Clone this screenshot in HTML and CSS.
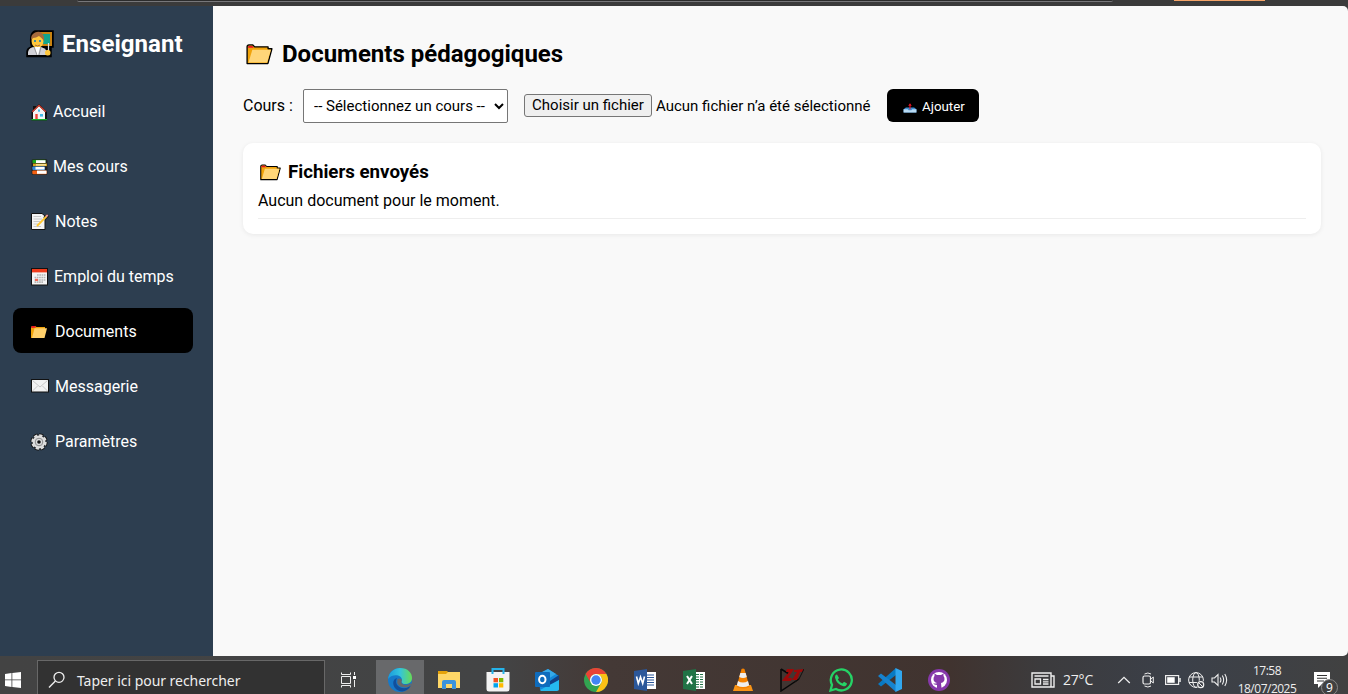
FILE: index.html
```html
<!DOCTYPE html>
<html lang="fr">
<head>
<meta charset="utf-8">
<title>Documents pédagogiques</title>
<link rel="stylesheet" href="styles.css">
</head>
<body>
<svg class="defs" aria-hidden="true">
  <symbol id="folder" viewBox="0 0 28 22">
    <path d="M1 20.5V3Q1 1 3 1H7L9 3H23V5H27L22.8 20.5Z" fill="#f0a30a" stroke="currentColor" stroke-width="1.4" stroke-linejoin="round"/>
    <path d="M6.5 6H26L22 19.5H2.5Z" fill="#ffd679"/>
    <path class="tab" d="M2 4V3Q2 2 3 2H6.5L8 4Z"/>
  </symbol>
  <symbol id="folder-flat" viewBox="0 0 16 12">
    <path d="M0 12V2Q0 0 1.5 0H4L5.5 1H14V3L11 12Z" fill="#f0a30a"/>
    <path d="M3.5 2.2H16L13.5 12H1Z" fill="#ffd06b"/>
    <path class="tab" d="M.3 2V1Q.5 0 1.5 0H4L5 1.5Z"/>
  </symbol>
</svg>
<div class="browser-bar"><div class="address"></div><div class="accent"></div></div>
<div class="app">
  <aside class="sidebar">
    <h2 class="brand">
      <svg width="28" height="28" viewBox="0 0 28 28"><path d="M9 1H27V17H25V26.5H1V22Q1 18 6 17Q4 14 5 6Q6 2 9 1Z" fill="#000" stroke="#000" stroke-width="1.5"/><path d="M13 2H26V16H15Z" fill="#c98310"/><path d="M15 4H24V14H17Z" fill="#12a58d"/><ellipse cx="11.5" cy="11" rx="6" ry="7" fill="#ffc83d"/><path d="M5.5 10Q4 5 9 2.5Q16 0 18 7V11Q16 8 13 6Q10 8 7 8Z" fill="#a66a3c"/><circle cx="9" cy="11" r="1.1" fill="#167db8"/><circle cx="14" cy="11" r="1.1" fill="#167db8"/><path d="M9 15Q11.5 17 14 15" stroke="#a66a3c" fill="none"/><path d="M2 25V22Q3 17 9 17H15Q19 18 21 21V25Z" fill="#d2d2d7"/><path d="M9 17H14L12 25H11Z" fill="#fff"/><path d="M8 17L11 25M15 17L13 25" stroke="#999"/><path d="M22.5 13V22" stroke="#ddd" stroke-width="1.2"/><rect x="19" y="20" width="5.5" height="5.5" rx="2.5" fill="#ffc83d"/></svg>
      <span>Enseignant</span>
    </h2>
    <nav class="menu">
      <a class="item home"><svg width="18" height="18" viewBox="0 0 18 18"><path d="M1.5 17.5V9L3 7V3H6V4L9 1L17 9V17.5Z" fill="#111"/><path d="M3 9L9 3L15 9V16H3Z" fill="#f4f4f4"/><path d="M2.3 8.8L9 2.3L15.8 8.8" fill="none" stroke="#d53c2a" stroke-width="1.3"/><rect x="5.3" y="11" width="2.4" height="5" fill="#ed4937"/><rect x="10" y="11" width="3" height="2.6" fill="#45bce8"/><rect x="8" y="6.5" width="2" height="2.2" fill="#45bce8"/><path d="M1.5 16.6H17" stroke="#16b32a" stroke-width="1.4"/></svg><span>Accueil</span></a>
      <a class="item courses"><svg width="18" height="18" viewBox="0 0 18 18"><rect x="1.5" y="1" width="16" height="16" rx="2" fill="#222"/><rect x="2.5" y="1.8" width="13" height="3.3" fill="#19a51b"/><rect x="6" y="2.2" width="9.5" height="2.8" fill="#fff"/><rect x="3" y="5.6" width="14" height="2.5" fill="#d7a51e"/><path d="M6 6.9H16" stroke="#fff2b8" stroke-width="1.2"/><rect x="2.3" y="8.5" width="12.7" height="3.5" rx="1" fill="#3088d8"/><rect x="5.5" y="8.9" width="9" height="2.6" fill="#fff"/><rect x="2.3" y="12.4" width="14.5" height="3.8" rx="1" fill="#f36012"/><rect x="7" y="12.6" width="9.5" height="3.2" fill="#fff"/></svg><span>Mes cours</span></a>
      <a class="item notes"><svg width="19" height="19" viewBox="0 0 19 19"><path d="M1.5 1.5H12L15 4V17.5H1.5Z" fill="#f4f4f4" stroke="#111"/><path d="M3.5 4.5H11M3.5 7H12M3.5 9.5H10M3.5 12H8M3.5 14.5H11" stroke="#bcbcbc" stroke-width=".8"/><path d="M18.3 3L14.5 6.5" stroke="#222" stroke-width="3.6"/><path d="M16.5 4.3L7 14" stroke="#ffc62d" stroke-width="1.8"/><path d="M17.7 3L16 4.7" stroke="#ef9c9c" stroke-width="1.8"/></svg><span>Notes</span></a>
      <a class="item schedule"><svg width="18" height="19" viewBox="0 0 18 19"><rect x="1.5" y="1.5" width="16" height="16.5" fill="#f4f4f4" stroke="#111"/><path d="M2 2H17V5.4H2Z" fill="#ef3c1c"/><path d="M7 8H15.5M4.5 10.5H15.5M4.5 13H15.5M4.5 15.2H13" stroke="#b5b5b5" stroke-width="1.7" stroke-dasharray="1.7 .6"/><rect x="5" y="11.8" width="3" height="2.2" fill="#f26c57"/></svg><span>Emploi du temps</span></a>
      <a class="item documents active"><svg width="16" height="12"><use href="#folder-flat"/></svg><span>Documents</span></a>
      <a class="item messages"><svg width="19" height="14" viewBox="0 0 19 14"><rect x="1.5" y=".5" width="17" height="12.5" fill="#f2f2f2" stroke="#111"/><path d="M2.5 1.5L10 8L17.5 1.5M2.5 12L7.5 7M12.5 7L17.5 12" fill="none" stroke="#bbb" stroke-width=".8"/></svg><span>Messagerie</span></a>
      <a class="item settings"><svg width="18" height="18" viewBox="0 0 18 18"><circle cx="9" cy="9" r="7.4" fill="#222"/><circle cx="9" cy="9" r="7" fill="none" stroke="#171717" stroke-width="3.4" stroke-dasharray="4 1.5"/><circle cx="9" cy="9" r="6.4" fill="#ddd"/><circle cx="9" cy="9" r="6.7" fill="none" stroke="#ddd" stroke-width="2" stroke-dasharray="3.3 1.96"/><circle cx="9" cy="9" r="3.8" fill="none" stroke="#8b8b8b"/><circle cx="9" cy="9" r="1.8" fill="#111"/></svg><span>Paramètres</span></a>
    </nav>
  </aside>
  <main class="content">
    <h1 class="title"><svg width="27" height="21"><use href="#folder"/></svg><span>Documents pédagogiques</span></h1>
    <form class="upload">
      <label class="course-label">Cours :</label>
      <select class="course"><option>-- Sélectionnez un cours --</option></select>
      <button type="button" class="browse">Choisir un fichier</button>
      <span class="filename">Aucun fichier n’a été sélectionné</span>
      <button type="button" class="add"><svg width="14" height="11" viewBox="0 0 15 12"><path d="M3 6H12L14.5 8V11.5H.5V8Z" fill="#3d8fd1"/><path d="M.5 8H5L6 9H9L10 8H14.5V11.5H.5Z" fill="#b9daf2"/><path d="M7.5 8V2" stroke="#e81224" stroke-width="1.2"/><path d="M5.5 4L7.5 1.5L9.5 4Z" fill="#e81224"/></svg><span>Ajouter</span></button>
    </form>
    <section class="card">
      <h3 class="card-title"><svg width="21" height="17"><use href="#folder"/></svg><span>Fichiers envoyés</span></h3>
      <p class="empty">Aucun document pour le moment.</p>
    </section>
  </main>
</div>
<footer class="taskbar">
  <div class="start"><svg width="16" height="16" viewBox="0 0 16 16"><path d="M0 2L6.5 1V7.5H0ZM7.3 .9L16 0V7.5H7.3ZM0 8.3H6.5V15L0 14ZM7.3 8.3H16V16L7.3 15Z" fill="#fff"/></svg></div>
  <div class="search"><svg width="18" height="18" viewBox="0 0 18 18"><circle cx="11" cy="6.3" r="5" fill="none" stroke="#eee" stroke-width="1.3"/><path d="M7.4 10L1 16.5" stroke="#eee" stroke-width="1.4"/></svg><span>Taper ici pour rechercher</span></div>
  <div class="taskview"><svg width="17" height="16" viewBox="0 0 17 16"><path d="M1.5 .5V2.5H10.5V.5M1.5 15.5V13.5H10.5V15.5M1.5 4.5H10.5V11.5H1.5ZM14.5 0V3M14.5 8V15" fill="none" stroke="#eee"/><rect x="13" y="4" width="3" height="3" fill="#fff"/></svg></div>
  <div class="tasks">
    <div class="task current"><svg width="24" height="24" viewBox="0 0 24 24"><defs><linearGradient id="eg"><stop offset="0" stop-color="#1a9bdc"/><stop offset=".5" stop-color="#34c4dc"/><stop offset="1" stop-color="#68dc54"/></linearGradient></defs><circle cx="12" cy="12" r="12" fill="#1679c9"/><path d="M0 11C1 4 6 0 12 0C20 0 24 5 24 10C24 14 21 16 17 16C14 16 13 14 14 12C14 7 5 5 0 11Z" fill="url(#eg)"/><path d="M9 10C6 16 11 21 18 20Q21 19.5 22.8 17.6C19 25 11 25 7 20C4 16 5 11 9 10Z" fill="#124f9c"/><path d="M9.5 11Q7.5 19 17 19.5Q20.5 19.5 23.2 17Q24 16 22.5 15.5Q18 18 14.5 16Q12.5 14.5 14 12Q12 9.5 9.5 11Z" fill="#68696b"/></svg></div>
    <div class="task"><svg width="22" height="20" viewBox="0 0 22 20"><path d="M0 1H9L11 3H22V18H0Z" fill="#e6a309"/><path d="M0 4H8L10 2H22V18H0Z" fill="#ffd767"/><path d="M4 19V12Q4 10 6 10H16Q18 10 18 12V19H14V14H8V19Z" fill="#3c93dd"/></svg></div>
    <div class="task"><svg width="24" height="24" viewBox="0 0 24 24"><path d="M6.5 6V1H17.5V6" fill="none" stroke="#25b3ea" stroke-width="2"/><path d="M.5 4H23.5V21Q23.5 23.5 21 23.5H3Q.5 23.5 .5 21Z" fill="#f3f3f3"/><path d="M6.5 4V6M17.5 4V6" stroke="#25b3ea" stroke-width="2"/><path d="M7.5 10H12V14.3H7.5Z" fill="#f25022"/><path d="M13 10H17.3V14.3H13Z" fill="#7fba00"/><path d="M7.5 15.2H12V19.5H7.5Z" fill="#00a4ef"/><path d="M13 15.2H17.3V19.5H13Z" fill="#ffb900"/></svg></div>
    <div class="task"><svg width="24" height="24" viewBox="0 0 24 24"><path d="M4 6L13 1L24 8V22H5Z" fill="#1489da"/><path d="M5 5L13 1L21 6L13 11Z" fill="#35a9e9"/><path d="M12 15L24 7V12L14 19Z" fill="#123f83"/><path d="M5 22L24 12V21Q24 23 22 23H6Z" fill="#25b9ef"/><rect y="4" width="15" height="15" rx="1" fill="#0f6cbd"/><ellipse cx="7.3" cy="11.5" rx="3.2" ry="3.8" fill="none" stroke="#fff" stroke-width="2"/></svg></div>
    <div class="task"><svg width="24" height="24" viewBox="0 0 24 24"><circle cx="12" cy="12" r="12" fill="#32a350"/><path d="M1.6 6A12 12 0 0 1 22.4 6H12A6 6 0 0 0 6.8 15Z" fill="#e94335"/><path d="M22.4 6A12 12 0 0 1 12 24L17.2 15A6 6 0 0 0 17 8.5L12 6Z" fill="#fbc116"/><circle cx="12" cy="12" r="6" fill="#fff"/><circle cx="12" cy="12" r="4.7" fill="#4285f4"/></svg></div>
    <div class="task"><svg width="22" height="22" viewBox="0 0 22 22"><rect x="11" y="3" width="11" height="17" fill="#fff"/><path d="M13 6H20M13 8.5H20M13 11H20M13 13.5H20M13 16H20" stroke="#2b579a"/><path d="M0 2L13 0V22L0 20Z" fill="#2b579a"/><path d="M2.5 7.5L4.3 14.5L6.5 8L8.7 14.5L10.5 7.5" fill="none" stroke="#fff" stroke-width="1.6"/></svg></div>
    <div class="task"><svg width="22" height="22" viewBox="0 0 22 22"><rect x="11" y="3" width="11" height="17" fill="#fff"/><path d="M13 5.5H20M13 8H20M13 10.5H20M13 13H20M13 15.5H20M13 18H20" stroke="#217346" stroke-width="1.2"/><path d="M16.5 4V19" stroke="#fff"/><path d="M0 2L13 0V22L0 20Z" fill="#217346"/><path d="M4 7L9 15M9 7L4 15" stroke="#fff" stroke-width="2"/></svg></div>
    <div class="task"><svg width="20" height="24" viewBox="0 0 20 24"><path d="M2 17H18L20 23H0Z" fill="#f99416"/><path d="M8.5 1Q10 0 11.5 1L16.5 19Q10 22 3.5 19Z" fill="#f58200"/><path d="M7.3 5H12.7L13.8 9Q10 11 6.2 9ZM5 13Q10 16 15 13L16.2 17.5Q10 20.5 3.8 17.5Z" fill="#eee"/></svg></div>
    <div class="task"><svg width="24" height="24" viewBox="0 0 24 24"><path d="M1 1V23L19 11M1 1L9 6M1 23V16" fill="none" stroke="#080808" stroke-width="1.5"/><path d="M7 1H14L8 10H12L11 13H2L4 10L9 4H6Z" fill="#9b0909"/><path d="M14 2L24 1L22 4H20L17 12H12L17 4H14Z" fill="#9b0909"/><path d="M24 1L19 11L15 14" fill="none" stroke="#111"/></svg></div>
    <div class="task"><svg width="24" height="24" viewBox="0 0 24 24"><path d="M1.5 22.5L3 16.8A10.5 10.5 0 1 1 7 21Z" fill="none" stroke="#25d366" stroke-width="2.3"/><path d="M8 6.5L10 10L8.8 11.5Q10.5 14.5 13.5 15.5L15 13.8L18 15.4Q17.5 18.5 14.5 18.2Q7.5 16.5 6 9.5Q6 6.5 8 6.5Z" fill="#25d366"/></svg></div>
    <div class="task"><svg width="24" height="24" viewBox="0 0 24 24"><path d="M18 0V7L3 18.5L0 16Z" fill="#087ac4"/><path d="M3 5.5L18 17V24L0 8Z" fill="#1683cf"/><path d="M17.5 0L24 3V21L17.5 24Z" fill="#31a7ef"/></svg></div>
    <div class="task"><svg width="22" height="22" viewBox="0 0 22 22"><circle cx="11" cy="11" r="11" fill="#8638aa"/><circle cx="11" cy="11" r="8" fill="#fff"/><path d="M9 19V16Q6 16 5 14Q7 15 9 14Q5.5 13 5.5 10Q5.5 8 6.5 7V4.5L9 6H13L15.5 4.5V7Q16.5 8 16.5 10Q16.5 13 13 14L13.5 19Z" fill="#8638aa"/></svg></div>
  </div>
  <div class="weather"><svg width="24" height="16" viewBox="0 0 24 16"><path d="M1 1H20V15H1ZM20 4H23V15H18M3.5 4H17.5" fill="none" stroke="#eee" stroke-width="1.4"/><path d="M4 7H9.5V12H4ZM12 7.5H17.5M12 9.8H17.5M12 12H17.5" fill="none" stroke="#eee" stroke-width="1.3"/></svg><span>27°C</span></div>
  <div class="tray">
    <svg width="14" height="8" viewBox="0 0 14 8"><path d="M1.2 7L7 1.3L12.8 7" fill="none" stroke="#eee" stroke-width="1.3"/></svg>
    <svg width="12" height="16" viewBox="0 0 12 16"><rect x="1" y="4" width="7.5" height="8" rx="1.5" fill="none" stroke="#eee" stroke-width="1.2"/><path d="M9 7L11.3 5V11L9 9M2.5 2Q6 0 9 2M2.5 14Q6 16 9 14" fill="none" stroke="#eee"/></svg>
    <svg width="16" height="10" viewBox="0 0 16 10"><rect x=".6" y=".6" width="13" height="8.8" fill="none" stroke="#eee" stroke-width="1.2"/><rect x="2.2" y="2.2" width="7.5" height="5.6" fill="#fff"/><path d="M15 3V7" stroke="#eee" stroke-width="1.5"/></svg>
    <svg class="globe" width="17" height="17" viewBox="0 0 17 17"><g fill="none" stroke="#eee"><circle cx="8" cy="8" r="7.4"/><ellipse cx="8" cy="8" rx="3.3" ry="7.4"/><path d="M1 5H15M1 10.5H15"/></g><circle cx="12.7" cy="12.7" r="4.1" fill="#40434a"/><circle cx="12.7" cy="12.7" r="3" fill="none" stroke="#eee" stroke-width="1.2"/><path d="M10.5 10.5L15 15" stroke="#eee"/></svg>
    <svg class="speaker" width="17" height="14" viewBox="0 0 17 14"><path d="M1 5H3.5L7 1.5V12.5L3.5 9H1ZM9 4.5Q10.8 7 9 9.5M11.3 2.5Q14 7 11.3 11.5M13.8 1Q17.5 7 13.8 13" fill="none" stroke="#eee" stroke-width="1.1"/></svg>
  </div>
  <div class="clock"><span>17:58</span><span>18/07/2025</span></div>
  <div class="notify"><svg width="16" height="16" viewBox="0 0 16 16"><path d="M0 0H16V12H8L4 16V12H0Z" fill="#fff"/><path d="M3 3.5H13M3 6.2H13M3 9H10" stroke="#333" stroke-width="1.1"/></svg><span class="badge">9</span></div>
</footer>
</body>
</html>
```
FILE: styles.css
```css
* { box-sizing: border-box; }
body { margin: 0; width: 1348px; height: 694px; overflow: hidden; display: flex; flex-direction: column; background: #3b3b3b; font-family: Roboto, sans-serif; color: #000; }
svg { display: block; flex: none; }
.defs { position: absolute; width: 0; height: 0; }
.tab { fill: #e81224; }
.browser-bar { height: 6px; flex: none; display: flex; background: #3b3b3b; }
.address { width: 1036px; height: 2px; margin-left: 77px; border-bottom: 1px solid #77777a; border-radius: 0 0 6px 6px; background: #2c2c2c; }
.accent { width: 91px; height: 1px; margin-left: 61px; background: #f6a468; }
.app { height: 650px; flex: none; display: flex; background: #f9f9f9; border-radius: 0 5px 5px 0; overflow: hidden; }
.sidebar { width: 213px; flex: none; background: #2d3e50; color: #fff; padding: 23px 20px 0 13px; }
.brand { display: flex; align-items: center; gap: 8px; height: 30px; margin: 0 0 29px 13px; font-size: 24px; font-weight: 700; letter-spacing: .05px; }
.brand svg { margin-top: -1px; }
.menu { display: flex; flex-direction: column; gap: 10px; }
.item { height: 45px; padding: 2px 0 0 17px; display: flex; align-items: center; border-radius: 8px; font-size: 16px; white-space: nowrap; }
.item svg { margin-right: 6px; }
.item.home svg, .item.courses svg { margin-right: 5px; }
.item.documents svg { margin: 0 8px 0 1px; }
.item.messages svg { margin-top: -2px; }
.item.settings svg { margin-right: 7px; }
.active { background: #000; }
.content { flex: 1; padding: 32px 27px 0 30px; }
.title { height: 32px; margin: 0; display: flex; align-items: center; padding-left: 3px; gap: 9px; font-size: 24px; font-weight: 700; }
.upload { height: 34px; margin-top: 19px; display: flex; align-items: center; font-size: 15px; white-space: nowrap; }
.course-label { width: 60px; margin-top: -2px; font-size: 16px; }
.course { width: 205px; height: 34px; padding: 5px 5px 5px 6px; border: 1px solid #767676; border-radius: 2px; background: #fff; color: #000; font: 15px Roboto, sans-serif; }
.browse { width: 128px; height: 23px; margin: -2px 0 0 16px; padding: 0; border: 1px solid #767676; border-radius: 3px; background: #efefef; color: #000; font: 15px/21px Roboto, sans-serif; }
.filename { width: 231px; margin-left: 4px; }
.add { width: 92px; height: 33px; margin-top: -1px; padding: 1px 0 0 16px; display: flex; align-items: center; gap: 5px; border: 0; border-radius: 6px; background: #000; color: #fff; font: 13.33px Roboto, sans-serif; }
.add svg { margin-top: 3px; }
.card { height: 91px; margin-top: 20px; padding: 17px 15px 15px; background: #fff; border-radius: 10px; box-shadow: 0 1px 5px rgba(0, 0, 0, .07); }
.card-title { display: flex; align-items: center; gap: 7px; height: 24px; margin: 0; padding-left: 2px; font-size: 18.7px; font-weight: 700; }
.card-title .tab { fill: #e3a316; }
.empty { height: 35px; margin: 0; padding-top: 7px; border-bottom: 1px solid #eee; font-size: 16px; line-height: 19px; }
.taskbar { height: 38px; flex: none; padding-top: 4px; display: flex; background: linear-gradient(90deg, #434343 0, #434445 500px, #443936 610px, #40332f 950px, #3c3b3d 1040px, #3b4049 1180px, #414141 1348px); color: #eee; font-family: "Open Sans", sans-serif; }
.start { width: 37px; padding: 12px 0 0 5px; }
.search { width: 288px; height: 36px; display: flex; align-items: center; gap: 11px; padding: 4px 0 0 10px; border: 1px solid #686868; background: #323232; font-family: "Noto Sans", sans-serif; font-size: 14px; letter-spacing: -.04px; white-space: nowrap; }
.taskview { width: 51px; padding: 12px 0 0 15px; }
.tasks { display: flex; }
.task { width: 49px; height: 34px; padding-top: 6px; display: flex; align-items: center; justify-content: center; }
.task.current { width: 48px; background: #68696b; }
.weather { width: 86px; margin-left: 68px; padding-top: 5px; display: flex; align-items: center; gap: 8px; font-size: 14px; letter-spacing: -.2px; }
.tray { width: 111px; padding-top: 6px; display: flex; align-items: center; gap: 11px; }
.globe { margin-left: -4px; }
.speaker { margin-left: -5px; }
.clock { width: 78px; display: flex; flex-direction: column; align-items: center; font-size: 12px; line-height: 18px; letter-spacing: -.5px; padding: 2px 0 0; }
.notify { position: relative; width: 40px; padding: 12px 0 0 8px; }
.badge { position: absolute; left: 15px; top: 19px; width: 17px; height: 17px; border: 1px solid #888; border-radius: 50%; background: #414141; color: #fff; font-size: 12px; line-height: 15px; text-align: center; }
```
